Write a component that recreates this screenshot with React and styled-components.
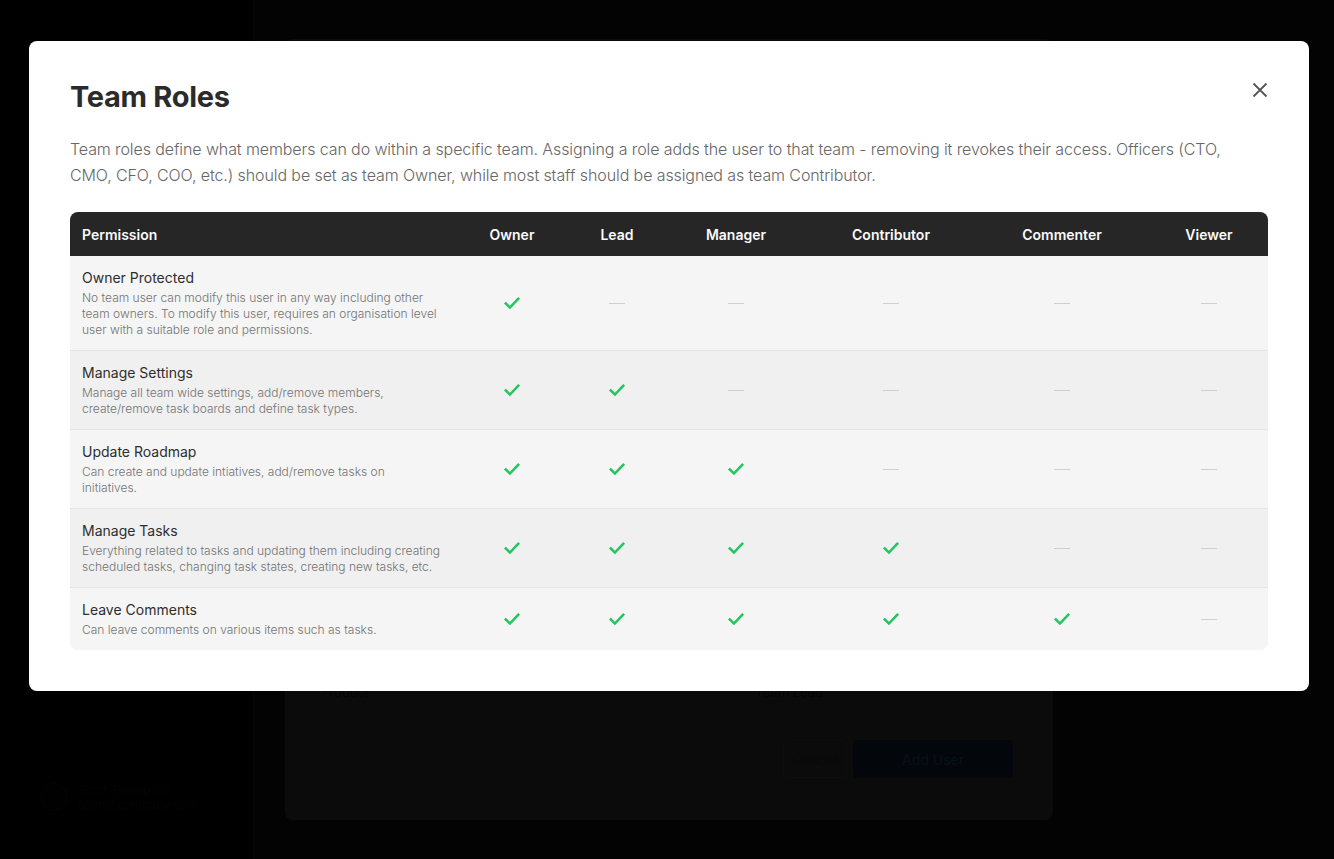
import React from "react";
import styled, { createGlobalStyle } from "styled-components";

const GlobalStyle = createGlobalStyle`
  * { box-sizing: border-box; }
  html, body { margin: 0; padding: 0; background: #000; }
  body {
    font-family: Inter, "Noto Sans", "Liberation Sans", sans-serif;
    -webkit-font-smoothing: antialiased;
  }
`;

/* ---------- dimmed app behind the dialog ---------- */

const Shell = styled.div`
  display: flex;
  height: 100vh;
  overflow: hidden;
`;

const Sidebar = styled.aside`
  width: 253px;
  flex-shrink: 0;
  background: #000;
  display: flex;
  flex-direction: column;
  justify-content: flex-end;
  padding: 0 0 47px 40px;
`;

const SidebarUser = styled.div`
  display: flex;
  align-items: center;
  gap: 10px;
`;

const Avatar = styled.div`
  width: 28px;
  height: 28px;
  border-radius: 50%;
  border: 1px solid #050505;
  background: #010101;
`;

const UserText = styled.div`
  display: flex;
  flex-direction: column;
  font-size: 12px;
  line-height: 15px;
  color: #040404;
`;

const Main = styled.main`
  flex: 1;
  background: #030303;
  border-left: 1px solid #070707;
`;

const BackLayer = styled.div`
  position: fixed;
  inset: 0;
  display: flex;
  justify-content: center;
  align-items: flex-end;
  padding: 0 0 39px 4px;
`;

const BackDialog = styled.div`
  width: 768px;
  height: 781px;
  background: #0b0b0b;
  border-radius: 8px;
  display: flex;
  flex-direction: column;
  justify-content: flex-end;
  padding: 0 40px 42px 36px;
`;

const BackRow = styled.div`
  display: flex;
  justify-content: space-between;
  font-size: 13px;
  color: #060606;
  padding-right: 190px;
  margin-bottom: 40px;
`;

const BackFooter = styled.div`
  display: flex;
  justify-content: flex-end;
  gap: 6px;
`;

const BackButton = styled.div`
  height: 38px;
  padding: 0 ${(p) => (p.$primary ? "48px" : "8px")};
  border-radius: 4px;
  display: flex;
  align-items: center;
  font-size: 14px;
  background: ${(p) => (p.$primary ? "#03070c" : "transparent")};
  border: 1px solid ${(p) => (p.$primary ? "#03070c" : "#0e0e0e")};
  color: ${(p) => (p.$primary ? "#08101c" : "#090909")};
`;

/* ---------- roles dialog ---------- */

const Overlay = styled.div`
  position: fixed;
  inset: 0;
  display: flex;
  justify-content: center;
  align-items: flex-start;
  padding: 41px 0 0 4px;
`;

const Modal = styled.section`
  position: relative;
  width: 1280px;
  background: #fff;
  border-radius: 8px;
  padding: 38px 41px 41px;
`;

const Title = styled.h2`
  margin: 0;
  font-size: 29px;
  line-height: 36px;
  font-weight: 700;
  letter-spacing: -0.3px;
  color: #2b2b2b;
`;

const CloseButton = styled.button`
  position: absolute;
  top: 37px;
  right: 37px;
  width: 24px;
  height: 24px;
  padding: 0;
  border: 0;
  background: none;
  display: flex;
  align-items: center;
  justify-content: center;
  color: #555;
  cursor: pointer;
`;

const Description = styled.p`
  margin: 21px 0 24px;
  max-width: 1170px;
  font-size: 16px;
  line-height: 26px;
  font-weight: 300;
  letter-spacing: -0.1px;
  color: #666;
`;

const Table = styled.div`
  display: grid;
  grid-template-columns: 384px 116px 94px 144px 166px 176px 118px;
  border-radius: 8px;
  overflow: hidden;
  background: #f5f5f5;
`;

const HeadCell = styled.div`
  height: 44px;
  display: flex;
  align-items: center;
  justify-content: ${(p) => (p.$first ? "flex-start" : "center")};
  padding: 0 12px;
  background: #262626;
  color: #fafafa;
  font-size: 14px;
  font-weight: 600;
`;

const Cell = styled.div`
  display: flex;
  flex-direction: column;
  justify-content: center;
  align-items: ${(p) => (p.$first ? "stretch" : "center")};
  padding: 12px;
  background: ${(p) => (p.$alt ? "#f0f0f0" : "#f5f5f5")};
  border-top: ${(p) => (p.$divider ? "1px solid #e4e4e4" : "0")};
`;

const PermName = styled.div`
  font-size: 14px;
  line-height: 20px;
  font-weight: 400;
  color: #2e2e2e;
`;

const PermDesc = styled.div`
  margin-top: 2px;
  max-width: 362px;
  font-size: 12px;
  line-height: 16px;
  font-weight: 300;
  color: #737373;
`;

const Dash = styled.span`
  display: block;
  width: 16px;
  height: 1px;
  background: #cfcfcf;
`;

const CheckMark = () => (
  <svg width="20" height="20" viewBox="0 0 24 24" fill="none" stroke="#22c55e"
    strokeWidth="3" strokeLinecap="square" strokeLinejoin="miter">
    <path d="M4.5 12.5l5 5 10-10.5" />
  </svg>
);

const CloseIcon = () => (
  <svg width="16" height="16" viewBox="0 0 16 16" fill="none" stroke="currentColor" strokeWidth="1.8">
    <path d="M1.5 1.5l13 13M14.5 1.5l-13 13" />
  </svg>
);

const roles = ["Owner", "Lead", "Manager", "Contributor", "Commenter", "Viewer"];

const permissions = [
  {
    name: "Owner Protected",
    desc: "No team user can modify this user in any way including other team owners. To modify this user, requires an organisation level user with a suitable role and permissions.",
    granted: 1,
  },
  {
    name: "Manage Settings",
    desc: "Manage all team wide settings, add/remove members, create/remove task boards and define task types.",
    granted: 2,
  },
  {
    name: "Update Roadmap",
    desc: "Can create and update intiatives, add/remove tasks on initiatives.",
    granted: 3,
  },
  {
    name: "Manage Tasks",
    desc: "Everything related to tasks and updating them including creating scheduled tasks, changing task states, creating new tasks, etc.",
    granted: 4,
  },
  {
    name: "Leave Comments",
    desc: "Can leave comments on various items such as tasks.",
    granted: 5,
  },
];

export default function App() {
  return (
    <>
      <GlobalStyle />
      <Shell>
        <Sidebar>
          <SidebarUser>
            <Avatar />
            <UserText>
              <span>Scott Thompson</span>
              <span>scott@company.com</span>
            </UserText>
          </SidebarUser>
        </Sidebar>
        <Main />
      </Shell>

      <BackLayer>
        <BackDialog>
          <BackRow>
            <span>Product</span>
            <span>Team Lead</span>
          </BackRow>
          <BackFooter>
            <BackButton>Cancel</BackButton>
            <BackButton $primary>Add User</BackButton>
          </BackFooter>
        </BackDialog>
      </BackLayer>

      <Overlay>
        <Modal>
          <Title>Team Roles</Title>
          <CloseButton aria-label="Close">
            <CloseIcon />
          </CloseButton>
          <Description>
            Team roles define what members can do within a specific team. Assigning a role adds the user to
            that team - removing it revokes their access. Officers (CTO, CMO, CFO, COO, etc.) should be set as
            team Owner, while most staff should be assigned as team Contributor.
          </Description>
          <Table>
            <HeadCell $first>Permission</HeadCell>
            {roles.map((r) => (
              <HeadCell key={r}>{r}</HeadCell>
            ))}
            {permissions.map((p, i) => {
              const alt = i % 2 === 1;
              const divider = i > 0;
              return (
                <React.Fragment key={p.name}>
                  <Cell $first $alt={alt} $divider={divider}>
                    <PermName>{p.name}</PermName>
                    <PermDesc>{p.desc}</PermDesc>
                  </Cell>
                  {roles.map((r, j) => (
                    <Cell key={r} $alt={alt} $divider={divider}>
                      {j < p.granted ? <CheckMark /> : <Dash />}
                    </Cell>
                  ))}
                </React.Fragment>
              );
            })}
          </Table>
        </Modal>
      </Overlay>
    </>
  );
}
